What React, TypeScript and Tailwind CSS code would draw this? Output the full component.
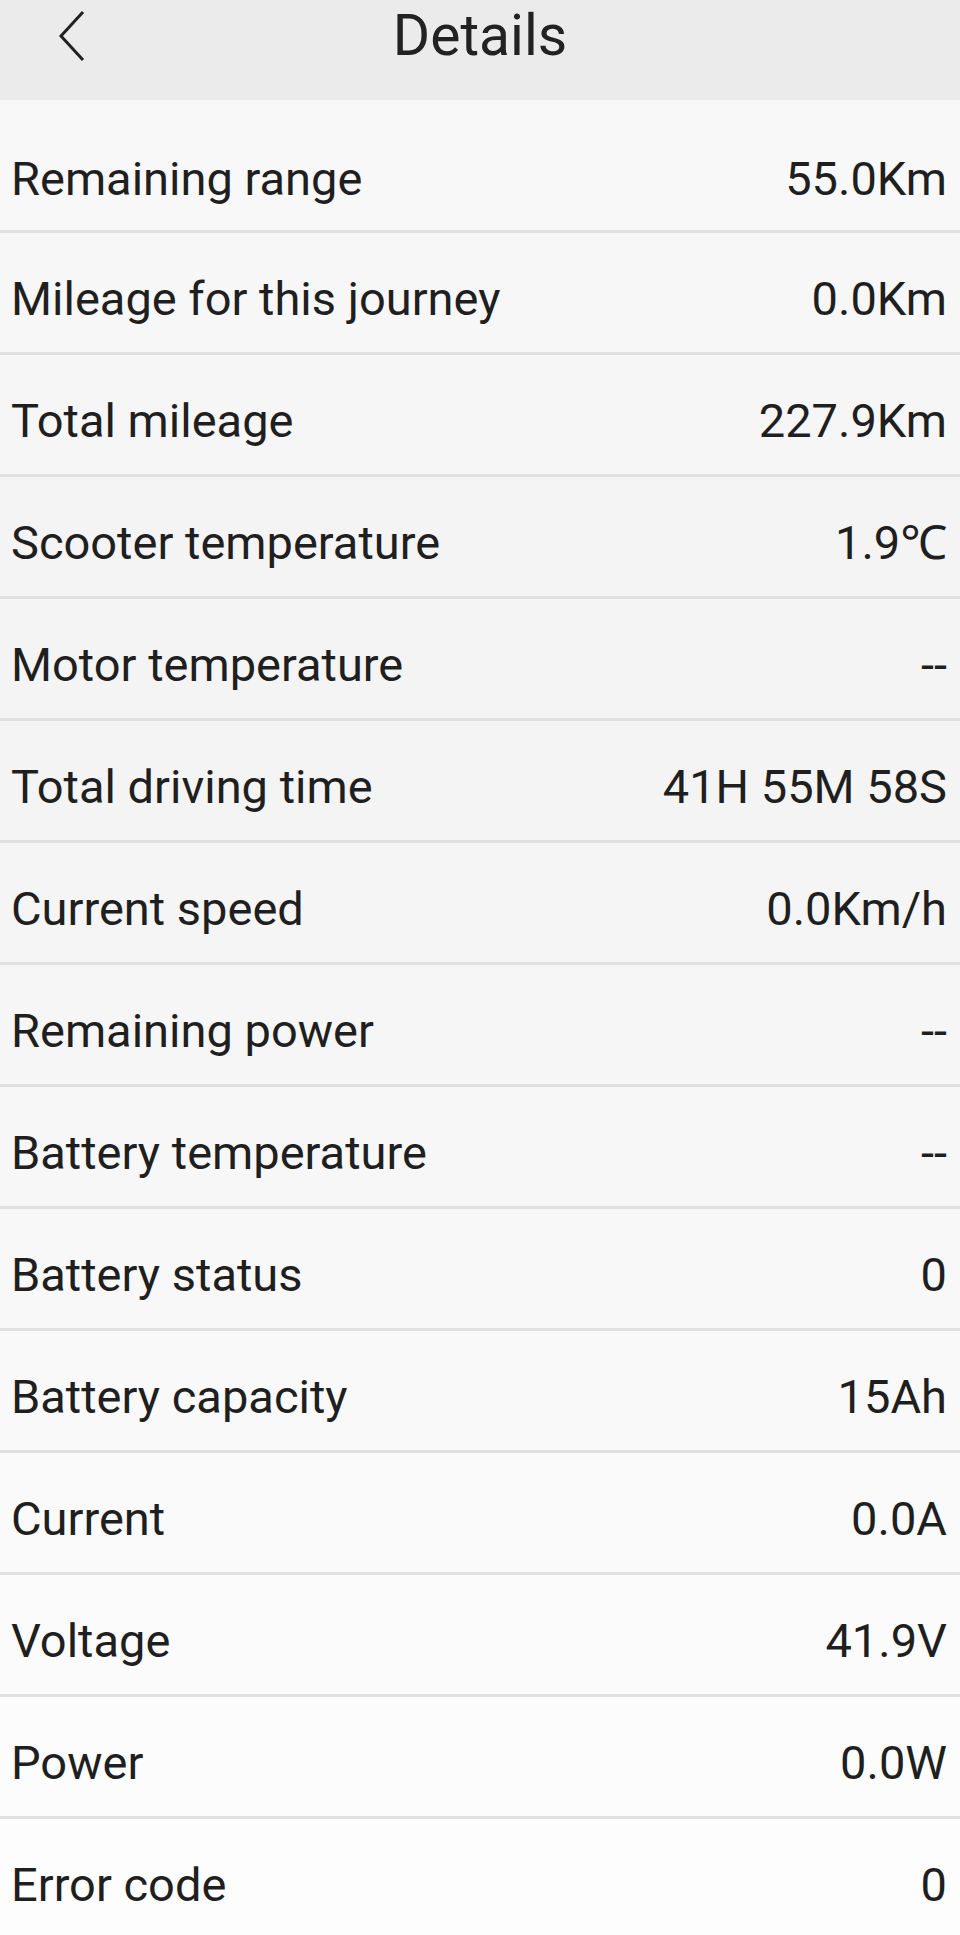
import React from 'react';

interface Row {
  label: string;
  value: string;
  bg: string;
}

const rows: Row[] = [
  { label: 'Remaining range', value: '55.0Km', bg: 'bg-[#f8f8f8]' },
  { label: 'Mileage for this journey', value: '0.0Km', bg: 'bg-[#f7f7f7]' },
  { label: 'Total mileage', value: '227.9Km', bg: 'bg-[#f6f6f6]' },
  { label: 'Scooter temperature', value: '1.9℃', bg: 'bg-[#f4f4f4]' },
  { label: 'Motor temperature', value: '--', bg: 'bg-[#f4f4f4]' },
  { label: 'Total driving time', value: '41H 55M 58S', bg: 'bg-[#f4f4f4]' },
  { label: 'Current speed', value: '0.0Km/h', bg: 'bg-[#f5f5f5]' },
  { label: 'Remaining power', value: '--', bg: 'bg-[#f6f6f6]' },
  { label: 'Battery temperature', value: '--', bg: 'bg-[#f7f7f7]' },
  { label: 'Battery status', value: '0', bg: 'bg-[#f8f8f8]' },
  { label: 'Battery capacity', value: '15Ah', bg: 'bg-[#f9f9f9]' },
  { label: 'Current', value: '0.0A', bg: 'bg-[#fafafa]' },
  { label: 'Voltage', value: '41.9V', bg: 'bg-[#fbfbfb]' },
  { label: 'Power', value: '0.0W', bg: 'bg-[#fcfcfc]' },
  { label: 'Error code', value: '0', bg: 'bg-[#fdfdfd]' },
];

const App: React.FC = () => {
  return (
    <div className="w-[960px] h-[1935px] overflow-hidden bg-[#fcfcfc] text-[#1f1f1f] font-['Roboto','Noto_Sans',sans-serif]">

      {/* top bar */}
      <div className="relative h-[100px] bg-[#ebebeb]">
        <div className="h-[72px] flex items-center justify-center">
          <h1 className="text-[57px] leading-none text-[#222] pb-[2px]">Details</h1>
        </div>
        <button className="absolute left-[52px] top-[6px] w-[40px] h-[60px] flex items-center justify-center">
          <svg width="40" height="60" viewBox="0 0 40 60" fill="none">
            <polyline points="31,6 9,30 31,54" stroke="#222" strokeWidth="3" strokeLinejoin="miter" />
          </svg>
        </button>
      </div>

      <div>
        {rows.map((row, i) => (
          <div
            key={row.label}
            className={`flex items-center justify-between pl-[11px] pr-[13px] border-b-[3px] border-[#e0e0e0] ${row.bg} ${i === 0 ? 'h-[133px] pt-[26px]' : 'h-[122px] pt-[11px]'}`}
          >
            <span className="text-[47px] leading-none">{row.label}</span>
            <span className="text-[47px] leading-none">{row.value}</span>
          </div>
        ))}
      </div>

    </div>
  );
};

export default App;
